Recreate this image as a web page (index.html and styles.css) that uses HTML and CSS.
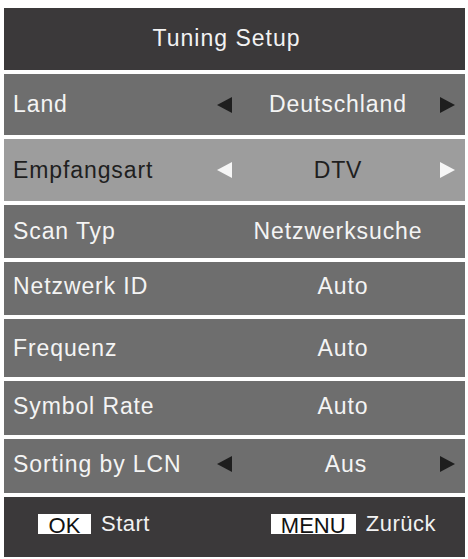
FILE: index.html
```html
<!DOCTYPE html>
<html>
<head>
<meta charset="utf-8">
<link rel="stylesheet" href="styles.css">
</head>
<body>
<div class="menu">
  <div class="title">Tuning Setup</div>
  <div class="row h61">
    <span class="label">Land</span>
    <svg class="arrow dark" viewBox="0 0 15 16"><polygon points="15,0 15,16 0,8"/></svg>
    <span class="value">Deutschland</span>
    <svg class="arrow dark" viewBox="0 0 15 16"><polygon points="0,0 0,16 15,8"/></svg>
  </div>
  <div class="row h62 active">
    <span class="label">Empfangsart</span>
    <svg class="arrow light" viewBox="0 0 15 16"><polygon points="15,0 15,16 0,8"/></svg>
    <span class="value">DTV</span>
    <svg class="arrow light" viewBox="0 0 15 16"><polygon points="0,0 0,16 15,8"/></svg>
  </div>
  <div class="row h53">
    <span class="label">Scan Typ</span>
    <span class="value">Netzwerksuche</span>
  </div>
  <div class="row h53 up">
    <span class="label">Netzwerk ID</span>
    <span class="value shift">Auto</span>
  </div>
  <div class="row h58">
    <span class="label">Frequenz</span>
    <span class="value shift">Auto</span>
  </div>
  <div class="row h54 up">
    <span class="label">Symbol Rate</span>
    <span class="value shift">Auto</span>
  </div>
  <div class="row h54 up">
    <span class="label">Sorting by LCN</span>
    <svg class="arrow dark" viewBox="0 0 15 16"><polygon points="15,0 15,16 0,8"/></svg>
    <span class="value shift2">Aus</span>
    <svg class="arrow dark" viewBox="0 0 15 16"><polygon points="0,0 0,16 15,8"/></svg>
  </div>
  <div class="footer">
    <div class="hint ok"><span class="key k-ok">OK</span><span class="htext">Start</span></div>
    <div class="hint back"><span class="key k-menu">MENU</span><span class="htext">Zurück</span></div>
  </div>
</div>
</body>
</html>
```

FILE: styles.css
```css
html, body {
  margin: 0;
  padding: 0;
  background: #ffffff;
}
body {
  width: 468px;
  height: 559px;
  overflow: hidden;
  font-family: "Liberation Sans", Arial, sans-serif;
}
.menu {
  display: flex;
  flex-direction: column;
  gap: 4px;
  padding: 8px 3px 0 4px;
}
.title {
  height: 62px;
  background: #3b393a;
  color: #f2f2f2;
  font-size: 23px;
  letter-spacing: 1px;
  display: flex;
  align-items: center;
  justify-content: center;
  padding: 0 16px 2px 0;
  box-sizing: border-box;
}
.row {
  background: #6e6e6e;
  color: #f4f4f4;
  font-size: 23px;
  letter-spacing: 0.9px;
  display: grid;
  grid-template-columns: 204px 15px 1fr 15px;
  align-items: center;
  padding: 0 10px 0 9px;
  box-sizing: border-box;
}
.row.up { padding-bottom: 4px; }
.h53 { height: 53px; }
.h54 { height: 54px; }
.h58 { height: 58px; }
.h61 { height: 61px; }
.h62 { height: 62px; }
.row.active {
  background: #9d9d9d;
  color: #1f1f1f;
}
.label { grid-column: 1; }
.value {
  grid-column: 3;
  text-align: center;
  padding-left: 4px;
}
.value.shift { padding-left: 14px; }
.value.shift2 { padding-left: 20px; }
.arrow {
  width: 15px;
  height: 16px;
  display: block;
}
.arrow.dark { fill: #1e1e1e; }
.arrow.light { fill: #f6f6f6; }
.footer {
  height: 60px;
  background: #3b393a;
  color: #f2f2f2;
  display: flex;
  align-items: center;
  padding: 0 0 6px 34px;
  box-sizing: border-box;
  font-size: 22px;
}
.hint {
  display: flex;
  align-items: center;
}
.back { margin-left: auto; margin-right: 29px; }
.key {
  background: #ffffff;
  color: #111111;
  height: 20px;
  line-height: 24px;
  font-size: 22px;
  display: flex;
  justify-content: center;
  margin-right: 10px;
  overflow: visible;
}
.k-ok { width: 53px; }
.k-menu { width: 85px; }
.htext { letter-spacing: 0.5px; }
```
